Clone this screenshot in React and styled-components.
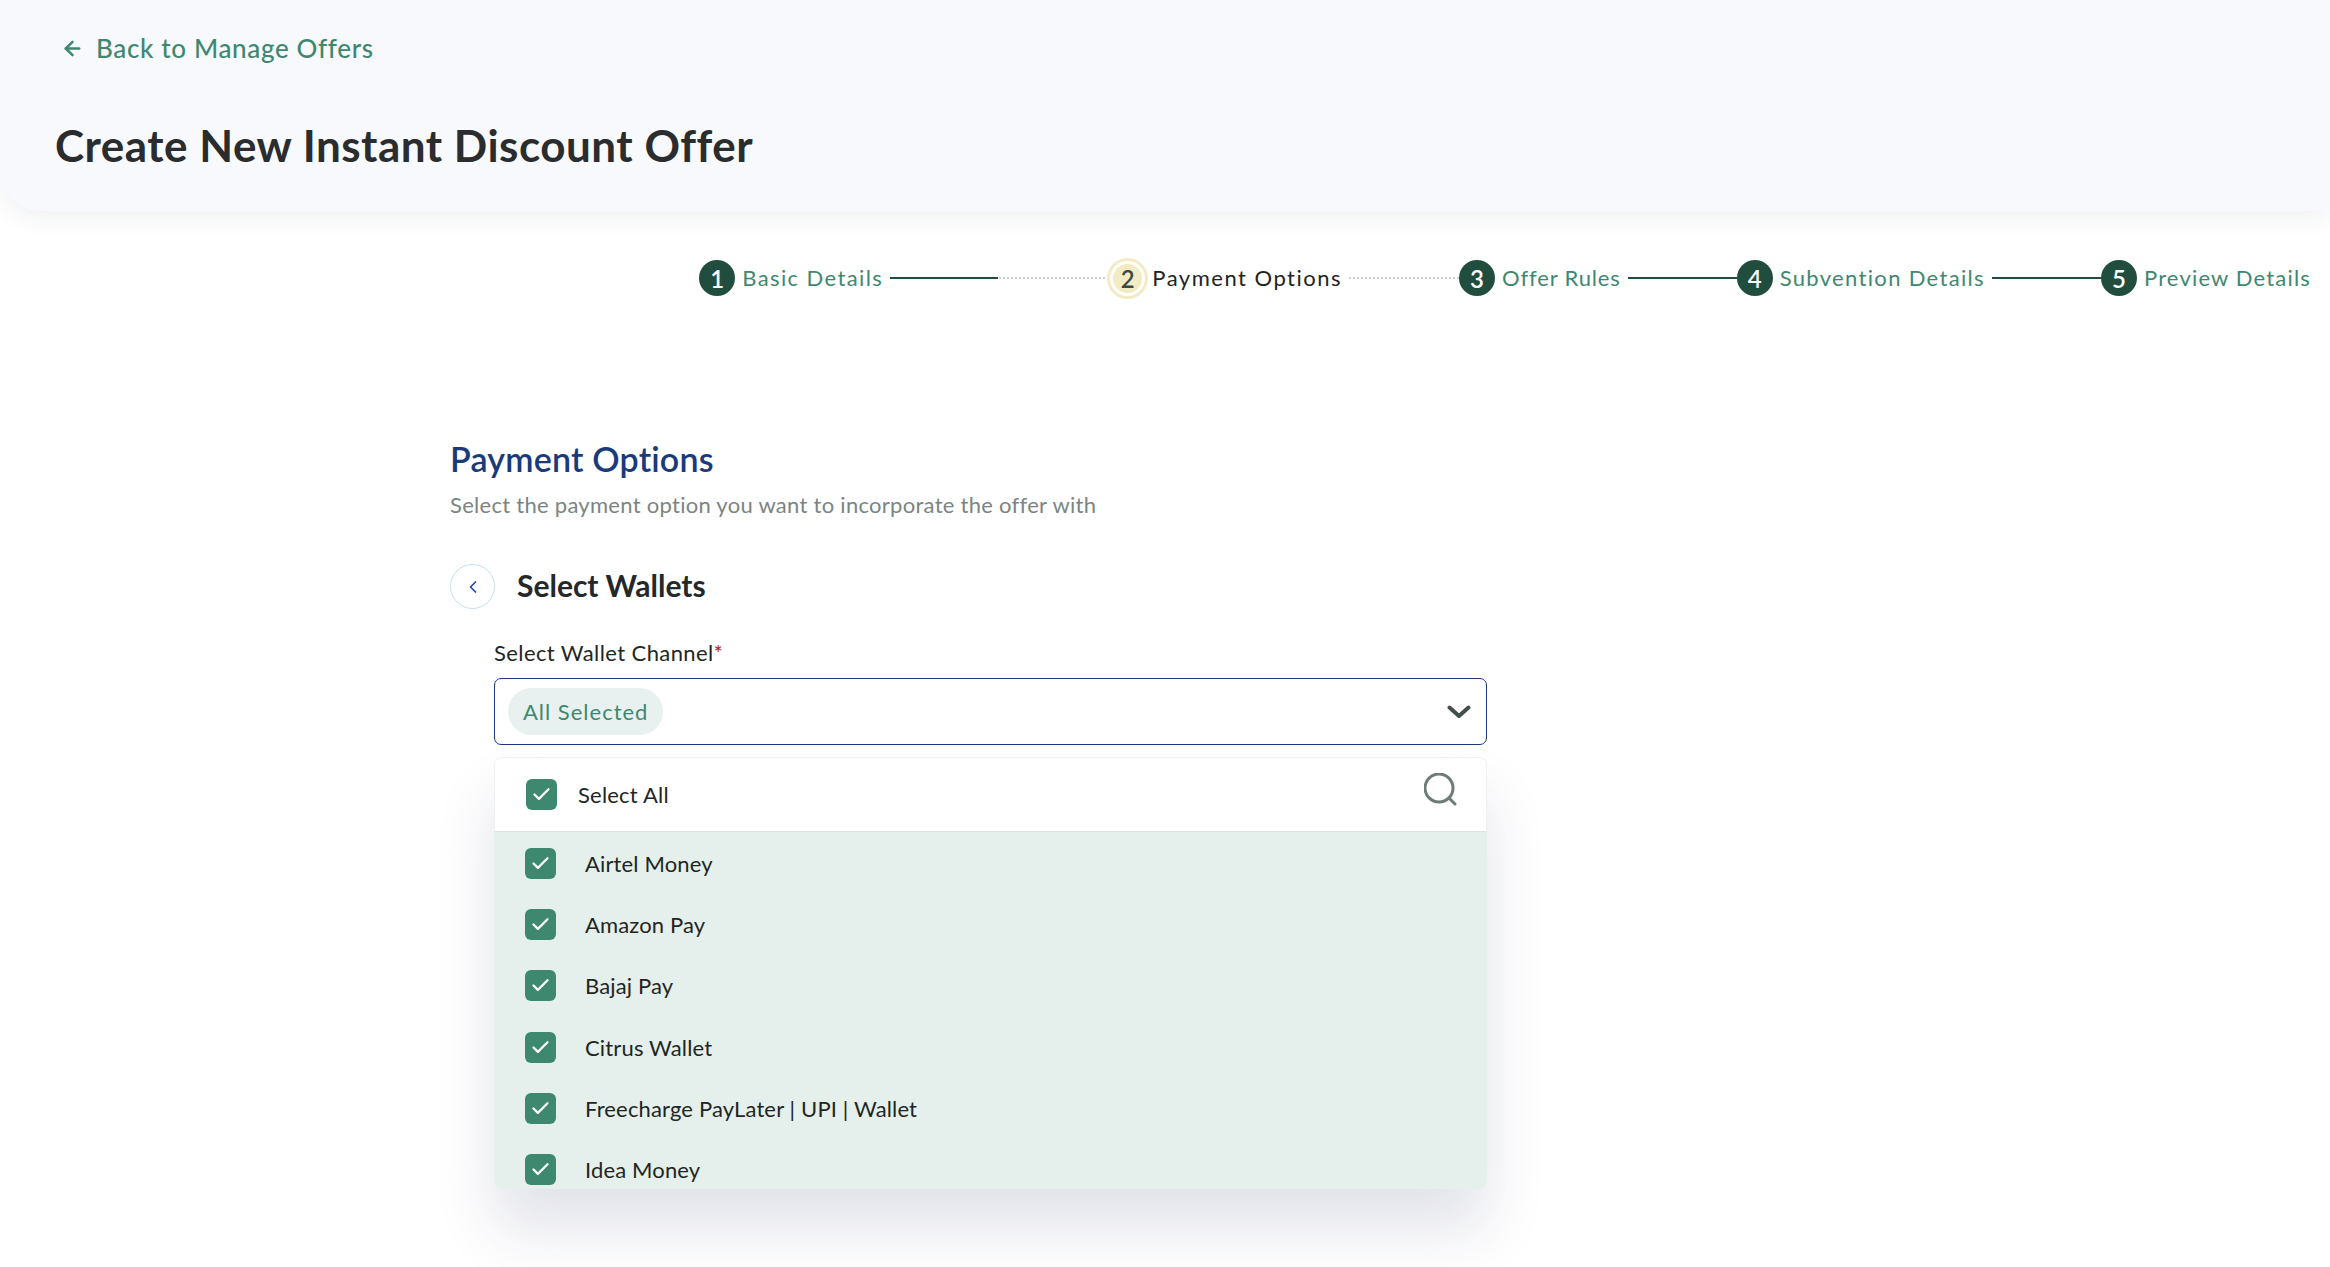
import React from 'react';
import styled, { createGlobalStyle } from 'styled-components';
import { FiArrowLeft, FiChevronLeft, FiCheck } from 'react-icons/fi';

const GlobalStyle = createGlobalStyle`
    html, body {
        margin:0;
        height:100%;
        background:#fff;
        overflow:hidden;
    }
    body {
        font-family:"Lato", "Liberation Sans", sans-serif;
        color:#222;
    }
`

const steps = [
    { num: 1, label: "Basic Details", line: "half", spacing: 1.4 },
    { num: 2, label: "Payment Options", line: "dotted", active: true, spacing: 1.5 },
    { num: 3, label: "Offer Rules", line: "solid", spacing: .85 },
    { num: 4, label: "Subvention Details", line: "solid", spacing: 1.33 },
    { num: 5, label: "Preview Details", spacing: 1.17 },
]

const wallets = [
    "Airtel Money",
    "Amazon Pay",
    "Bajaj Pay",
    "Citrus Wallet",
    "Freecharge PayLater | UPI | Wallet",
    "Idea Money",
]

const App = () => {
    return (
        <Page>
            <GlobalStyle />
            <Header>
                <BackLink href="#"><FiArrowLeft />Back to Manage Offers</BackLink>
                <Title>Create New Instant Discount Offer</Title>
            </Header>

            <Stepper>
                {steps.map((s) => (
                    <React.Fragment key={s.num}>
                        <Step>
                            <StepNum active={s.active}>{s.num}</StepNum>
                            <StepLabel active={s.active} spacing={s.spacing}>{s.label}</StepLabel>
                        </Step>
                        {s.line && <Connector type={s.line} />}
                    </React.Fragment>
                ))}
            </Stepper>

            <Content>
                <SectionTitle>Payment Options</SectionTitle>
                <SectionText>Select the payment option you want to incorporate the offer with</SectionText>

                <SubHeader>
                    <CircleBack><FiChevronLeft /></CircleBack>
                    <SubTitle>Select Wallets</SubTitle>
                </SubHeader>

                <Field>
                    <Label>Select Wallet Channel<Req>*</Req></Label>
                    <SelectBox>
                        <Chip>All Selected</Chip>
                        <svg width="24" height="14" viewBox="0 0 24 14" fill="none">
                            <path d="M2.5 2.5 L12 11 L21.5 2.5" stroke="#434f4c" strokeWidth="4" strokeLinecap="round" strokeLinejoin="round" />
                        </svg>
                    </SelectBox>

                    <Panel>
                        <PanelHead>
                            <Check><FiCheck /></Check>
                            <SelectAll>Select All</SelectAll>
                            <SearchIcon width="33" height="33" viewBox="0 0 33 33" fill="none">
                                <circle cx="15" cy="15" r="14" stroke="#6e7b78" strokeWidth="3" />
                                <path d="M26 26 L31 31" stroke="#6e7b78" strokeWidth="3" strokeLinecap="round" />
                            </SearchIcon>
                        </PanelHead>
                        <List>
                            {wallets.map((w) => (
                                <Row key={w}>
                                    <Check><FiCheck /></Check>
                                    <RowText>{w}</RowText>
                                </Row>
                            ))}
                        </List>
                    </Panel>
                </Field>
            </Content>
        </Page>
    );
};

export default App;

const Page = styled.div`
    height:1267px;
    overflow:hidden;
    background:#fff;
`

const Header = styled.div`
    height:211px;
    box-sizing:border-box;
    background:#f8f9fd;
    border-bottom-left-radius:40px;
    box-shadow:0 6px 24px rgba(30,40,70,.07);
    padding:31px 0 0 55px;
`

const BackLink = styled.a`
    display:flex;
    align-items:center;
    gap:12px;
    padding-left:6px;
    color:#3f8870;
    font-size:26px;
    font-weight:500;
    letter-spacing:.65px;
    line-height:34px;
    text-decoration:none;

    svg{
        font-size:23px;
        stroke-width:2.6;
    }
`

const Title = styled.h1`
    margin:53px 0 0;
    font-size:44px;
    font-weight:700;
    letter-spacing:.5px;
    line-height:54px;
    color:#2a2c2e;
`

const Stepper = styled.div`
    display:flex;
    align-items:center;
    justify-content:flex-end;
    height:134px;
    padding-right:19px;
`

const Step = styled.div`
    display:flex;
    align-items:center;
    gap:7px;
`

const StepNum = styled.div`
    width:${props => props.active ? "29px" : "36px"};
    height:${props => props.active ? "29px" : "36px"};
    margin:${props => props.active ? "0 3px 0 6px" : "0"};
    border-radius:50%;
    display:flex;
    align-items:center;
    justify-content:center;
    background:${props => props.active ? "#f3ebc4" : "#214d3f"};
    color:${props => props.active ? "#3c4a45" : "#fff"};
    box-shadow:${props => props.active ? "0 0 0 3px #fff, 0 0 0 6px #f3ebc4" : "none"};
    font-size:24px;
    font-weight:600;
`

const StepLabel = styled.span`
    font-size:22px;
    letter-spacing:${props => props.spacing}px;
    padding-bottom:2px;
    color:${props => props.active ? "#1f2322" : "#3f8870"};
    white-space:nowrap;
`

const Connector = styled.div`
    width:${props => props.type === "half" ? "217px" : props.type === "dotted" ? "110px" : "109px"};
    height:2px;
    margin-left:7px;
    background:${props => props.type === "solid" ? "#214d3f"
        : props.type === "half" ? "linear-gradient(to right,#214d3f 50%,transparent 50%)"
        : "none"};

    &::after{
        content:"";
        display:${props => props.type === "solid" ? "none" : "block"};
        height:2px;
        margin-left:${props => props.type === "half" ? "50%" : "0"};
        background:repeating-linear-gradient(to right,#cfcfcf 0 2px,transparent 2px 4px);
    }
`

const Content = styled.div`
    padding:94px 0 0 450px;
`

const SectionTitle = styled.h2`
    margin:0;
    font-size:34px;
    font-weight:600;
    letter-spacing:.2px;
    line-height:40px;
    color:#1a3a7c;
`

const SectionText = styled.p`
    margin:12px 0 0;
    font-size:22px;
    letter-spacing:.28px;
    line-height:28px;
    color:#7a8583;
`

const SubHeader = styled.div`
    display:flex;
    align-items:center;
    gap:22px;
    margin-top:45px;
`

const CircleBack = styled.div`
    width:45px;
    height:45px;
    box-sizing:border-box;
    border:1px solid #c5e0ec;
    border-radius:50%;
    display:flex;
    align-items:center;
    justify-content:center;
    color:#1a4aa0;
    font-size:20px;
`

const SubTitle = styled.h3`
    margin:-3px 0 0;
    font-size:30px;
    font-weight:700;
    color:#24282a;
`

const Field = styled.div`
    width:993px;
    margin:30px 0 0 44px;
`

const Label = styled.div`
    font-size:22px;
    letter-spacing:.4px;
    line-height:28px;
    color:#222625;
`

const Req = styled.span`
    color:#b3202a;
`

const SelectBox = styled.div`
    height:67px;
    margin-top:11px;
    box-sizing:border-box;
    border:1.5px solid #1a3a7c;
    border-radius:7px;
    display:flex;
    align-items:center;
    justify-content:space-between;
    padding:0 15px 0 13px;
`

const Chip = styled.div`
    height:47px;
    padding:0 15px;
    border-radius:24px;
    display:flex;
    align-items:center;
    background:#e8f1ef;
    color:#3f8870;
    font-size:22px;
    letter-spacing:1px;
`

const Panel = styled.div`
    margin-top:12px;
    border-radius:8px;
    box-shadow:0 40px 60px rgba(30,40,90,.13);
    overflow:hidden;
`

const PanelHead = styled.div`
    height:75px;
    box-sizing:border-box;
    display:flex;
    align-items:center;
    padding:0 29px 0 31px;
    background:#fff;
    border:1px solid #eef1f0;
    border-bottom:1px solid #e0e2e2;
    border-radius:8px 8px 0 0;
`

const Check = styled.div`
    width:31px;
    height:31px;
    flex:none;
    border-radius:6px;
    background:#3f8870;
    color:#fff;
    display:flex;
    align-items:center;
    justify-content:center;
    font-size:21px;

    svg{
        stroke-width:2.6;
    }
`

const SelectAll = styled.span`
    margin-left:21px;
    flex:1;
    font-size:22px;
    letter-spacing:.2px;
    color:#1f2624;
`

const SearchIcon = styled.svg`
    margin-top:-10px;
`

const List = styled.div`
    height:357px;
    overflow:hidden;
    background:#e5efeb;
    padding:1px 0 0 31px;
    box-sizing:border-box;
`

const Row = styled.div`
    height:61.2px;
    display:flex;
    align-items:center;
`

const RowText = styled.span`
    margin-left:29px;
    font-size:22px;
    letter-spacing:.15px;
    color:#1f2624;
`
